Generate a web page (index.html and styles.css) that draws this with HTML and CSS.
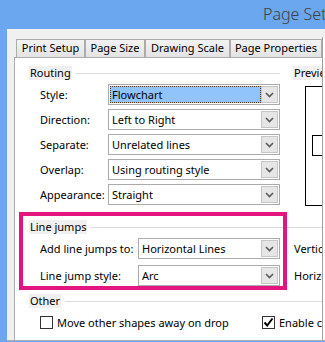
FILE: index.html
```html
<!DOCTYPE html>
<html>
<head>
<meta charset="utf-8">
<title>Page Setup</title>
<link rel="stylesheet" href="styles.css">
</head>
<body>
<div class="window">
  <div class="titlebar"><span class="title">Page Setup</span></div>
  <div class="dialog">
    <div class="sheet">
      <div class="tabs">
        <div class="tab tab-print">Print Setup</div>
        <div class="tab tab-size">Page Size</div>
        <div class="tab tab-scale">Drawing Scale</div>
        <div class="tab tab-props">Page Properties</div>
      </div>
      <div class="panel">
        <div class="top">
          <div class="group-routing">
            <div class="legend"><span class="legend-text">Routing</span><span class="legend-line"></span></div>
            <div class="rows">
              <div class="row"><span class="row-label">Style:</span>
                <div class="select"><span class="select-value focused">Flowchart</span><span class="select-arrow"><svg width="9" height="6" viewBox="0 0 9 6"><polyline points="1,1 4.5,4.5 8,1" fill="none" stroke="#5a5a5a" stroke-width="1.6"/></svg></span></div></div>
              <div class="row"><span class="row-label">Direction:</span>
                <div class="select"><span class="select-value">Left to Right</span><span class="select-arrow"><svg width="9" height="6" viewBox="0 0 9 6"><polyline points="1,1 4.5,4.5 8,1" fill="none" stroke="#5a5a5a" stroke-width="1.6"/></svg></span></div></div>
              <div class="row"><span class="row-label">Separate:</span>
                <div class="select"><span class="select-value">Unrelated lines</span><span class="select-arrow"><svg width="9" height="6" viewBox="0 0 9 6"><polyline points="1,1 4.5,4.5 8,1" fill="none" stroke="#5a5a5a" stroke-width="1.6"/></svg></span></div></div>
              <div class="row"><span class="row-label">Overlap:</span>
                <div class="select"><span class="select-value">Using routing style</span><span class="select-arrow"><svg width="9" height="6" viewBox="0 0 9 6"><polyline points="1,1 4.5,4.5 8,1" fill="none" stroke="#5a5a5a" stroke-width="1.6"/></svg></span></div></div>
              <div class="row"><span class="row-label">Appearance:</span>
                <div class="select"><span class="select-value">Straight</span><span class="select-arrow"><svg width="9" height="6" viewBox="0 0 9 6"><polyline points="1,1 4.5,4.5 8,1" fill="none" stroke="#5a5a5a" stroke-width="1.6"/></svg></span></div></div>
            </div>
          </div>
          <div class="group-preview">
            <div class="legend"><span class="legend-text">Preview</span></div>
            <div class="preview-box"><div class="preview-shape"></div></div>
          </div>
        </div>

        <div class="section">
          <div class="legend"><span class="legend-text">Line jumps</span><span class="legend-line"></span></div>
          <div class="jump-rows">
            <div class="jump-row"><span class="jump-label">Add line jumps to:</span>
              <div class="select select-jump"><span class="select-value">Horizontal Lines</span><span class="select-arrow"><svg width="9" height="6" viewBox="0 0 9 6"><polyline points="1,1 4.5,4.5 8,1" fill="none" stroke="#5a5a5a" stroke-width="1.6"/></svg></span></div>
              <span class="side-label">Vertical line jump size:</span></div>
            <div class="jump-row"><span class="jump-label">Line jump style:</span>
              <div class="select select-jump"><span class="select-value">Arc</span><span class="select-arrow"><svg width="9" height="6" viewBox="0 0 9 6"><polyline points="1,1 4.5,4.5 8,1" fill="none" stroke="#5a5a5a" stroke-width="1.6"/></svg></span></div>
              <span class="side-label">Horizontal line jump size:</span></div>
          </div>
        </div>

        <div class="section section-other">
          <div class="legend"><span class="legend-text">Other</span><span class="legend-line"></span></div>
          <div class="checks">
            <div class="check check-first"><span class="box"></span><span class="check-label">Move other shapes away on drop</span></div>
            <div class="check"><span class="box"><svg width="11" height="11" viewBox="0 0 11 11"><polyline points="1.5,5.5 4.2,8.5 9.5,1.5" fill="none" stroke="#000" stroke-width="2"/></svg></span><span class="check-label">Enable connector splitting</span></div>
          </div>
        </div>
      </div>
    </div>
    <div class="strip"></div>
  </div>
  <div class="highlight"></div>
</div>
</body>
</html>
```

FILE: styles.css
```css
* { box-sizing: border-box; }
html, body { margin: 0; padding: 0; }
body {
  width: 325px;
  height: 342px;
  overflow: hidden;
  background: #6aa7ee;
  font-family: "Noto Sans", "Open Sans", sans-serif;
  font-size: 11px;
  color: #000;
}
.window { position: relative; width: 325px; height: 342px; overflow: hidden; }
.titlebar { height: 29px; padding-left: 263px; white-space: nowrap; overflow: hidden; }
.title { font-size: 16px; line-height: 28px; color: #404040; font-weight: 300; }

.dialog {
  margin-left: 7px;
  height: 312px;
  background: #f0f0f0;
  display: flex;
  border-bottom: 1px solid #adadad;
}
.sheet { width: 315px; padding-left: 7px; padding-top: 10px; display: flex; flex-direction: column; flex: none; }
.tabs { display: flex; padding-left: 2px; height: 18px; flex: none; }
.tab {
  height: 18px;
  border: 1px solid #acacac;
  border-bottom: none;
  background: linear-gradient(#f3f3f3, #e3e3e3);
  text-align: center;
  line-height: 16px;
  white-space: nowrap;
  flex: none;
}
.tab-print { width: 69px; }
.tab-size { width: 60px; }
.tab-scale { width: 85px; }
.tab-props { width: 92px; }

.panel {
  flex: 1;
  background: #fff;
  border-left: 1px solid #adadad;
  border-top: 1px solid #adadad;
  overflow: hidden;
  padding: 8px 0 0 14px;
}
.strip { flex: 1; margin-top: 8px; background: #fff; border-left: 1px solid #a0a0a0; }

.top { display: flex; }
.group-routing { width: 251px; flex: none; }
.legend { display: flex; align-items: center; height: 14px; white-space: nowrap; }
.legend-text { background: #f0f0f0; padding: 0 1px; line-height: 14px; }
.legend-line { flex: 1; height: 1px; background: #dcdcdc; margin-left: 4px; }

.rows { display: flex; flex-direction: column; gap: 4px; margin-top: 4px; padding-left: 11px; }
.row { display: flex; align-items: center; height: 21px; }
.row-label { width: 68px; flex: none; white-space: nowrap; }

.select {
  width: 172px;
  height: 21px;
  border: 1px solid #ababab;
  background: #fff;
  display: flex;
  align-items: center;
  padding: 1px;
  flex: none;
}
.select-jump { width: 142px; }
.select-value {
  flex: 1;
  height: 17px;
  line-height: 15px;
  padding-left: 1px;
  border: 1px solid transparent;
  white-space: nowrap;
  overflow: hidden;
}
.select-value.focused { background: #91c4fb; border: 1px dotted #5b3b1e; }
.select-arrow {
  width: 17px;
  height: 17px;
  border: 1px solid #c6c6c6;
  background: #e6e6e6;
  display: flex;
  align-items: center;
  justify-content: center;
  flex: none;
}
.select-arrow svg { display: block; }

.group-preview { margin-left: 13px; flex: none; width: 80px; }
.preview-box {
  margin-top: 6px;
  margin-left: 12px;
  width: 60px;
  height: 120px;
  border: 1px solid #000;
  padding: 48px 0 0 6px;
}
.preview-shape { width: 40px; height: 21px; border: 1px solid #000; }

.section { margin-top: 14px; }
.jump-rows { display: flex; flex-direction: column; gap: 6px; margin-top: 4px; padding-left: 11px; }
.jump-row { display: flex; align-items: center; height: 21px; white-space: nowrap; }
.jump-label { width: 98px; flex: none; }
.side-label { margin-left: 14px; flex: none; }

.section-other { margin-top: 8px; }
.checks { display: flex; margin-top: 8px; padding-left: 11px; white-space: nowrap; }
.check { display: flex; align-items: center; height: 13px; flex: none; }
.check-first { width: 222px; }
.box {
  width: 13px;
  height: 13px;
  border: 1px solid #333;
  background: #fff;
  display: flex;
  align-items: center;
  justify-content: center;
  flex: none;
}
.box svg { display: block; }
.check-label { margin-left: 4px; }

.highlight {
  position: absolute;
  left: 19px;
  top: 212px;
  width: 268px;
  height: 78px;
  border: 4px solid #e4157f;
}
```
